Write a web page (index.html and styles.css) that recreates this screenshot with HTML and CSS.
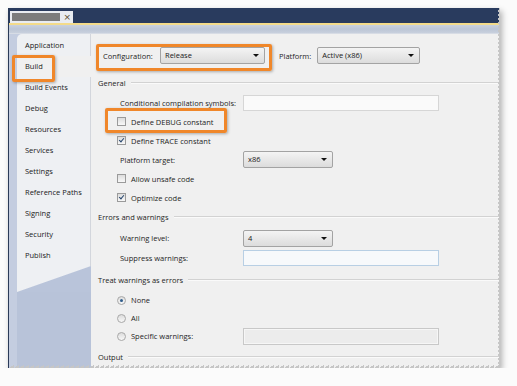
FILE: index.html
```html
<!DOCTYPE html>
<html lang="en">
<head>
    <meta charset="UTF-8">
    <title>Project Properties - Build</title>
    <link rel="stylesheet" href="styles.css">
</head>
<body>
    <div class="window">
        <!-- Document tab strip -->
        <div class="titlebar">
            <div class="doc-tab">
                <span class="doc-name"></span>
                <span class="doc-close">&times;</span>
            </div>
        </div>
        <div class="accent-line"></div>
        <div class="band"></div>

        <div class="main">
            <!-- Property page tabs -->
            <div class="sidebar">
                <ul class="tabs">
                    <li>Application</li>
                    <li class="active"><span class="callout-build">Build</span></li>
                    <li>Build Events</li>
                    <li>Debug</li>
                    <li>Resources</li>
                    <li>Services</li>
                    <li>Settings</li>
                    <li>Reference Paths</li>
                    <li>Signing</li>
                    <li>Security</li>
                    <li>Publish</li>
                </ul>
                <div class="tabs-end"></div>
            </div>

            <!-- Build page -->
            <div class="content">
                <div class="config-row">
                    <div class="config-box">
                        <span class="label">Configuration:</span>
                        <div class="select select-config">Release</div>
                    </div>
                    <span class="label platform-label">Platform:</span>
                    <div class="select select-platform">Active (x86)</div>
                </div>

                <div class="group-title"><span>General</span></div>
                <div class="row first-row indent-label">
                    <span class="label field-label">Conditional compilation symbols:</span>
                    <div class="textbox"></div>
                </div>
                <div class="row check-row debug-row">
                    <span class="checkbox"></span>
                    <span class="label">Define DEBUG constant</span>
                </div>
                <div class="row check-row">
                    <span class="checkbox checked"></span>
                    <span class="label">Define TRACE constant</span>
                </div>
                <div class="row indent-label">
                    <span class="label field-label">Platform target:</span>
                    <div class="select select-small">x86</div>
                </div>
                <div class="row check-row">
                    <span class="checkbox"></span>
                    <span class="label">Allow unsafe code</span>
                </div>
                <div class="row check-row">
                    <span class="checkbox checked"></span>
                    <span class="label">Optimize code</span>
                </div>

                <div class="group-title errors-title"><span>Errors and warnings</span></div>
                <div class="row tall-row first-row indent-label">
                    <span class="label field-label">Warning level:</span>
                    <div class="select select-small">4</div>
                </div>
                <div class="row tall-row indent-label">
                    <span class="label field-label">Suppress warnings:</span>
                    <div class="textbox textbox-focus"></div>
                </div>

                <div class="group-title"><span>Treat warnings as errors</span></div>
                <div class="radio-list">
                    <div class="row check-row">
                        <span class="radio selected"></span>
                        <span class="label">None</span>
                    </div>
                    <div class="row check-row">
                        <span class="radio"></span>
                        <span class="label">All</span>
                    </div>
                    <div class="row check-row">
                        <span class="radio"></span>
                        <span class="label radio-field-label">Specific warnings:</span>
                        <div class="textbox textbox-disabled"></div>
                    </div>
                </div>

                <div class="group-title"><span>Output</span></div>
            </div>
        </div>
    </div>
</body>
</html>
```

FILE: styles.css
```css
/* Page */
body {
    margin: 0;
    background-color: #fbfbfb;
    font-family: 'Open Sans', 'Noto Sans', sans-serif;
    font-size: 7.5px;
    color: #1e1e1e;
}

/* Window frame */
.window {
    position: relative;
    margin: 8px 0 0 8px;
    width: 492px;
    height: 360px;
    overflow: hidden;
    border-left: 1px solid #2a3a58;
    box-sizing: border-box;
    box-shadow: 2px 3px 6px rgba(0, 0, 0, 0.3);
    background: #f0f0f0;
    display: flex;
    flex-direction: column;
}

/* Torn paper edges (right and bottom) */
.window::before,
.window::after {
    content: '';
    position: absolute;
    z-index: 2;
}

.window::before {
    top: 0;
    right: 0;
    bottom: 0;
    width: 3px;
    background-image: linear-gradient(120deg, transparent 50%, #c6c6c6 50%);
    background-size: 3px 4px;
}

.window::after {
    left: 0;
    right: 0;
    bottom: 0;
    height: 3px;
    background-image: linear-gradient(150deg, transparent 50%, #c6c6c6 50%);
    background-size: 5px 3px;
}

.titlebar {
    height: 15px;
    background: #293b5e;
    padding: 3px 0 0 1px;
    box-sizing: border-box;
}

.doc-tab {
    width: 63px;
    height: 12px;
    background: #e9ecf1;
    display: flex;
    align-items: center;
    padding: 0 2px;
    box-sizing: border-box;
}

.doc-name {
    width: 50px;
    height: 8px;
    background: #7c7c7c;
}

.doc-close {
    margin-left: 3px;
    font-family: 'DejaVu Sans', sans-serif;
    font-size: 9px;
    line-height: 10px;
    color: #5e4c2c;
}

.accent-line {
    height: 2px;
    background: #f3db8a;
}

.band {
    height: 8px;
    background: linear-gradient(#c9d1de, #bcc6d6 50%, #c8d0dd);
    border-bottom: 1px solid #d7dce5;
}

.main {
    flex: 1;
    display: flex;
}

/* Sidebar tabs */
.sidebar {
    width: 82px;
    flex-shrink: 0;
    background: #c4cde0;
    padding-left: 8px;
    box-sizing: border-box;
    display: flex;
    flex-direction: column;
}

.tabs {
    list-style: none;
    margin: 0;
    padding: 1px 0 0;
    background: #eef0f3;
    border-top-left-radius: 5px;
    border-right: 1px solid #d3d6dc;
}

.tabs li {
    height: 21px;
    line-height: 21px;
    padding-left: 8px;
    color: #1a1a1a;
}

.tabs li.active {
    background: #f0f0f0;
    margin-right: -1px;
    position: relative;
}

.callout-build {
    position: relative;
}

.callout-build::after {
    content: '';
    position: absolute;
    left: -13px;
    top: -6px;
    width: 37px;
    height: 21px;
    border: 3px solid #f0872a;
    border-radius: 2px;
    box-shadow: 1px 1px 3px rgba(0, 0, 0, 0.3);
}

.tabs-end {
    height: 26px;
    background: linear-gradient(to bottom right, #eef0f3 49%, #b9c4da 51%);
}

.sidebar::after {
    content: '';
    flex: 1;
    background: #b8c3d9;
}

/* Content area */
.content {
    flex: 1;
    padding: 10px 0 0 5px;
    background: #f0f0f0;
}

.label {
    white-space: nowrap;
}

.config-row {
    display: flex;
    align-items: center;
    height: 27px;
}

.config-box {
    display: flex;
    align-items: center;
    height: 27px;
    padding: 0 4px 4px 4px;
    box-sizing: border-box;
    width: 176px;
    border: 3px solid #f0872a;
    border-radius: 2px;
    box-shadow: 1px 1px 3px rgba(0, 0, 0, 0.3);
}

.config-box .label {
    width: 57px;
}

.platform-label {
    margin: 0 6px 0 7px;
    padding-bottom: 4px;
}

/* Drop-downs */
.select {
    position: relative;
    height: 17px;
    line-height: 15px;
    padding-left: 4px;
    box-sizing: border-box;
    border: 1px solid #a3a3a3;
    border-radius: 2px;
    background: linear-gradient(#f4f4f4, #e8e8e8 50%, #dcdcdc);
    color: #1a1a1a;
}

.select::after {
    content: '';
    position: absolute;
    right: 5px;
    top: 6px;
    border-left: 3px solid transparent;
    border-right: 3px solid transparent;
    border-top: 3px solid #111;
}

.select-config {
    width: 105px;
}

.select-platform {
    width: 103px;
    margin-bottom: 4px;
}

.select-small {
    width: 90px;
}

/* Group headers with etched rule */
.group-title {
    display: flex;
    align-items: center;
    height: 13px;
    margin-top: 5px;
    margin-left: 2px;
}

.group-title::after {
    content: '';
    flex: 1;
    margin-left: 5px;
    height: 1px;
    background: #d2d2d2;
    border-bottom: 1px solid #fafafa;
}

.errors-title {
    margin-top: 3px;
}

/* Rows */
.row {
    display: flex;
    align-items: center;
    height: 19px;
}

.first-row {
    margin-top: 4px;
}

.tall-row {
    height: 20px;
}

.errors-title + .first-row {
    margin-top: 5px;
}

.indent-label {
    padding-left: 24px;
}

.check-row {
    padding-left: 21px;
}

.field-label {
    width: 123px;
}

.debug-row {
    position: relative;
}

.debug-row::after {
    content: '';
    position: absolute;
    left: 9px;
    top: -4px;
    width: 116px;
    height: 19px;
    border: 3px solid #f0872a;
    border-radius: 2px;
    box-shadow: 1px 1px 3px rgba(0, 0, 0, 0.3);
}

/* Text boxes */
.textbox {
    width: 196px;
    height: 16px;
    box-sizing: border-box;
    border: 1px solid #d6d6d6;
    background: #fafafa;
}

.textbox-focus {
    border-color: #b8cfe4;
    background: #f7f9fb;
}

.textbox-disabled {
    height: 17px;
    border-color: #c8c8c8;
    background: #ececec;
    box-shadow: inset 0 0 0 1px #f6f6f6;
}

.radio-field-label {
    width: 112px;
}

.radio-list {
    margin-top: 5px;
}

.radio-list .row {
    height: 18px;
}

/* Check boxes and radio buttons */
.checkbox,
.radio {
    width: 9px;
    height: 9px;
    box-sizing: border-box;
    margin-right: 5px;
    flex-shrink: 0;
    border: 1px solid #9a9a9a;
    background: linear-gradient(#dcdcdc, #f8f8f8);
    position: relative;
}

.radio {
    border-radius: 50%;
    border-color: #a8a8a8;
}

.radio.selected::after {
    content: '';
    position: absolute;
    left: 2px;
    top: 2px;
    width: 3px;
    height: 3px;
    border-radius: 50%;
    background: #2f5d8c;
}

.checkbox.checked::after {
    content: '';
    position: absolute;
    left: 2px;
    top: 0;
    width: 2px;
    height: 4px;
    border-right: 1px solid #27466e;
    border-bottom: 1px solid #27466e;
    transform: rotate(40deg);
}
```
